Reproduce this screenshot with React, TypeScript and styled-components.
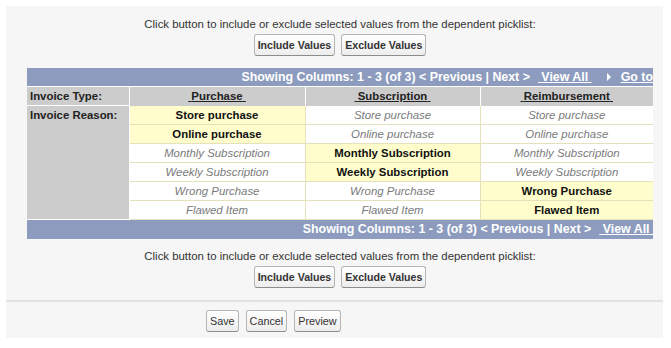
import styled, { createGlobalStyle } from 'styled-components';

const GlobalStyle = createGlobalStyle`
  body {
    margin: 0;
    background: #ffffff;
    font-family: 'Liberation Sans', Arial, sans-serif;
    color: #333333;
  }
`;

type Cell = { label: string; on: boolean };

const COLUMNS = ['Purchase', 'Subscription', 'Reimbursement'];

const REASONS = [
  'Store purchase',
  'Online purchase',
  'Monthly Subscription',
  'Weekly Subscription',
  'Wrong Purchase',
  'Flawed Item',
];

// which column each reason is included in
const OWNER = [0, 0, 1, 1, 2, 2];

const rows: Cell[][] = REASONS.map((label, i) =>
  COLUMNS.map((_, c) => ({ label, on: OWNER[i] === c }))
);

const Instructions: React.FC = () => (
  <InstructionBlock>
    <div className='Hint'>
      Click button to include or exclude selected values from the dependent picklist:
    </div>
    <ButtonRow>
      <Btn $bold>Include Values</Btn>
      <Btn $bold>Exclude Values</Btn>
    </ButtonRow>
  </InstructionBlock>
);

const PagerBar: React.FC<{ goTo?: boolean }> = ({ goTo }) => (
  <tr>
    <BarCell colSpan={4} $top={goTo}>
      Showing Columns: 1 - 3 (of 3) &lt; Previous | Next &gt;
      <BarLink $lead>&nbsp;View All&nbsp;</BarLink>
      {goTo && (
        <>
          <Arrow />
          <BarLink>Go to</BarLink>
        </>
      )}
    </BarCell>
  </tr>
);

const App: React.FC = () => {
  return (
    <>
      <GlobalStyle />
      <Panel>
        <Content>
          <Instructions />
          <Grid>
            <colgroup>
              <col style={{ width: 102 }} />
              <col style={{ width: 176 }} />
              <col style={{ width: 175 }} />
              <col />
            </colgroup>
            <tbody>
              <PagerBar goTo />
              <tr>
                <LabelCell>Invoice Type:</LabelCell>
                {COLUMNS.map((c) => (
                  <HeadCell key={c}>
                    <u>&nbsp;{c}&nbsp;</u>
                  </HeadCell>
                ))}
              </tr>
              {rows.map((row, i) => (
                <tr key={i}>
                  {i === 0 && (
                    <LabelCell rowSpan={rows.length}>Invoice Reason:</LabelCell>
                  )}
                  {row.map((cell, c) => (
                    <ValueCell key={c} $on={cell.on}>
                      {cell.label}
                    </ValueCell>
                  ))}
                </tr>
              ))}
              <PagerBar />
            </tbody>
          </Grid>
          <Instructions />
        </Content>
        <Footer>
          <Btn>Save</Btn>
          <Btn>Cancel</Btn>
          <Btn>Preview</Btn>
        </Footer>
      </Panel>
    </>
  );
};

const Panel = styled.div`
  width: 657px;
  margin: 6px 0 0 6px;
  background: #f6f6f6;
  padding-bottom: 6px;
`;

const Content = styled.div`
  padding: 11px 10px 12px 21px;
`;

const InstructionBlock = styled.div`
  display: flex;
  flex-direction: column;
  align-items: center;

  .Hint {
    font-size: 11.4px;
    line-height: 14px;
    color: #333333;
    margin-bottom: 3px;
  }
`;

const ButtonRow = styled.div`
  display: flex;
  gap: 6px;
`;

const Btn = styled.button<{ $bold?: boolean }>`
  height: 22px;
  padding: 0 3px;
  font-family: 'Liberation Sans', Arial, sans-serif;
  font-size: ${({ $bold }) => ($bold ? '10.6px' : '10.8px')};
  font-weight: ${({ $bold }) => ($bold ? 700 : 400)};
  color: #333333;
  background: linear-gradient(#ffffff, #ededed);
  border: 1px solid #b5b5b5;
  border-bottom-color: #8c8c8c;
  border-radius: 3px;
`;

const Grid = styled.table`
  width: 626px;
  margin: 12px 0 10px;
  table-layout: fixed;
  border-collapse: collapse;
  font-size: 11.4px;

  td {
    height: 18px;
    padding: 0;
    line-height: 18px;
    white-space: nowrap;
    overflow: hidden;
  }
`;

const BarCell = styled.td<{ $top?: boolean }>`
  background: #8d9cbe;
  color: #ffffff;
  font-weight: 700;
  font-size: 12.4px;
  text-align: right;
  border-bottom: ${({ $top }) => ($top ? '1px solid #ffffff' : 'none')};
  height: ${({ $top }) => ($top ? '18px' : '19px')} !important;
`;

const BarLink = styled.span<{ $lead?: boolean }>`
  margin-left: ${({ $lead }) => ($lead ? '8px' : '0')};
  text-decoration: underline;
  text-decoration-thickness: 1px;
`;

const Arrow = styled.span`
  display: inline-block;
  width: 0;
  height: 0;
  margin: 0 10px 0 15px;
  border-top: 4px solid transparent;
  border-bottom: 4px solid transparent;
  border-left: 4px solid #ffffff;
`;

const LabelCell = styled.td`
  background: #cccccc;
  color: #222222;
  font-weight: 700;
  padding-left: 3px !important;
  vertical-align: top;
  border-bottom: 1px solid #ffffff;
  border-right: 1px solid #ffffff;
`;

const HeadCell = styled.td`
  background: #cccccc;
  color: #222222;
  font-weight: 700;
  text-align: center;
  border-left: 1px solid #ffffff;
`;

const ValueCell = styled.td<{ $on: boolean }>`
  text-align: center;
  background: ${({ $on }) => ($on ? '#fffdcc' : '#ffffff')};
  color: ${({ $on }) => ($on ? '#111111' : '#7a7a7a')};
  font-weight: ${({ $on }) => ($on ? 700 : 400)};
  font-style: ${({ $on }) => ($on ? 'normal' : 'italic')};
  border-bottom: 1px solid #e6e1bd;
  border-left: 1px solid #e6e1bd;
`;

const Footer = styled.div`
  display: flex;
  gap: 7px;
  padding: 8px 0 0 200px;
  border-top: 2px solid #e2e2e2;
`;

export default App;
